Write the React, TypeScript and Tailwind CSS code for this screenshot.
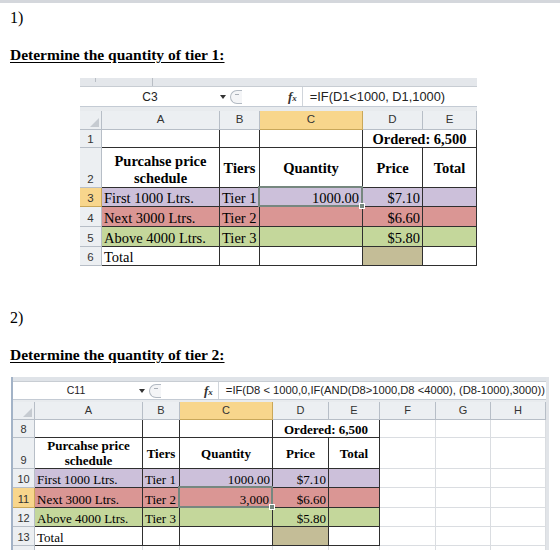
import React from "react";
import clsx from "clsx";

type Align = "l" | "c" | "r";

type CellSpec = {
  t?: React.ReactNode;
  a?: Align;
  bg?: string;
  b?: boolean;
  wide?: boolean;
  grid?: boolean;
  mid?: boolean;
  sel?: boolean;
  lh?: string;
};

type RowSpec = { n: string; h: string; sel?: boolean; open?: boolean; cells: CellSpec[] };

const PURPLE = "bg-[#ccc0da]";
const RED = "bg-[#da9694]";
const GREEN = "bg-[#c4d79b]";
const TAN = "bg-[#c4bd97]";

const HEAD_BG = "bg-[#eceff2]";
const HEAD_SEL = "bg-[#f8d68c]";

function Cell({ c, lead, open }: { c: CellSpec; lead: string; open?: boolean }) {
  return (
    <div
      className={clsx(
        "relative flex min-w-0 border-r",
        !open && "border-b",
        c.grid ? "border-[#dadde1]" : "border-[#2f2f2f]",
        c.wide && "col-span-2",
        c.mid ? "items-center" : "items-end",
        c.a === "r"
          ? c.sel
            ? "justify-end pr-[3px]"
            : "justify-end pr-[2px]"
          : c.a === "c"
            ? "justify-center text-center"
            : "justify-start pl-[2px]",
        c.bg ?? "bg-white",
        c.b && "font-bold"
      )}
    >
      {c.t !== undefined && <span className={clsx("whitespace-nowrap", c.lh ?? lead)}>{c.t}</span>}
      {c.sel && (
        <span className="pointer-events-none absolute -left-[2px] -top-[2px] -right-[1px] -bottom-[1px] z-10 border-2 border-[#76877f]">
          <span className="absolute -right-[4px] -bottom-[4px] h-[6px] w-[6px] border border-white bg-[#76877f]" />
        </span>
      )}
    </div>
  );
}

function FormulaBar(props: {
  name: string;
  formula: string;
  h: string;
  nameW: string;
  nameSize: string;
  fxMl: string;
  textSize: string;
}) {
  return (
    <div className={clsx("flex items-center border-b border-[#c4cbd4] bg-white", props.h)}>
      <div className={clsx("flex h-full items-center", props.nameW)}>
        <span
          className={clsx(
            "flex-1 text-center font-['Liberation_Sans',Arial,sans-serif] text-[#222]",
            props.nameSize
          )}
        >
          {props.name}
        </span>
        <span className="mr-[4px] h-0 w-0 border-x-[3px] border-t-[4px] border-x-transparent border-t-[#333]" />
      </div>
      <span className="flex h-[14px] w-[12px] rounded-l-full border border-r-0 border-[#b3bac3] bg-[#f4f5f7]">
        <span className="ml-[4px] mt-[3px] h-px w-[4px] bg-[#aab0b8]" />
      </span>
      <span
        className={clsx(
          "font-['Liberation_Serif',serif] text-[13px] font-bold italic leading-none text-[#333]",
          props.fxMl
        )}
      >
        f<span className="text-[9px]">x</span>
      </span>
      <span className="ml-[5px] h-full w-px bg-[#d0d5db]" />
      <span
        className={clsx(
          "whitespace-nowrap pl-[7px] font-['Liberation_Sans',Arial,sans-serif] text-[#222]",
          props.textSize
        )}
      >
        {props.formula}
      </span>
    </div>
  );
}

function Grid(props: {
  cols: string;
  headH: string;
  labels: string[];
  selCol: number;
  rows: RowSpec[];
  uiSize: string;
  lead: string;
}) {
  return (
    <div>
      <div className={clsx("grid", props.cols, props.headH)}>
        <div className={clsx("flex items-end justify-end border-r border-b border-[#b7bec7] p-[2px]", HEAD_BG)}>
          <span className="h-0 w-0 border-b-[9px] border-l-[9px] border-b-[#c6cbd1] border-l-transparent" />
        </div>
        {props.labels.map((l, i) => (
          <div
            key={l}
            className={clsx(
              "flex items-center justify-center border-r border-b font-['Liberation_Sans',Arial,sans-serif] text-[#333]",
              props.uiSize,
              i === props.selCol ? clsx(HEAD_SEL, "border-[#c9a759]") : clsx(HEAD_BG, "border-[#b7bec7]")
            )}
          >
            {l}
          </div>
        ))}
      </div>
      {props.rows.map((r) => (
        <div key={r.n} className={clsx("grid", props.cols, r.h)}>
          <div
            className={clsx(
              "flex items-end justify-center border-r font-['Liberation_Sans',Arial,sans-serif] text-[#333]",
              !r.open && "border-b",
              props.uiSize,
              r.sel ? clsx(HEAD_SEL, "border-[#c9a759]") : clsx(HEAD_BG, "border-[#b7bec7]")
            )}
          >
            {!r.open && <span className="leading-[15px]">{r.n}</span>}
          </div>
          {r.cells.map((c, i) => (
            <Cell key={i} c={c} lead={props.lead} open={r.open} />
          ))}
        </div>
      ))}
    </div>
  );
}

const g: CellSpec = { grid: true };

const sheetOne: RowSpec[] = [
  { n: "1", h: "h-[18px]", cells: [{}, {}, {}, { t: "Ordered: 6,500", a: "c", b: true, wide: true }] },
  {
    n: "2",
    h: "h-[40px]",
    cells: [
      {
        t: (
          <>
            Purcahse price
            <br />
            schedule
          </>
        ),
        a: "c",
        b: true,
        lh: "leading-[17px]",
      },
      { t: "Tiers", a: "c", b: true, mid: true },
      { t: "Quantity", a: "c", b: true, mid: true },
      { t: "Price", a: "c", b: true, mid: true },
      { t: "Total", a: "c", b: true, mid: true },
    ],
  },
  {
    n: "3",
    h: "h-[19px]",
    sel: true,
    cells: [
      { t: "First 1000 Ltrs.", bg: PURPLE },
      { t: "Tier 1", bg: PURPLE },
      { t: "1000.00", a: "r", bg: PURPLE, sel: true },
      { t: "$7.10", a: "r", bg: PURPLE },
      { bg: PURPLE },
    ],
  },
  {
    n: "4",
    h: "h-[20px]",
    cells: [
      { t: "Next 3000 Ltrs.", bg: RED },
      { t: "Tier 2", bg: RED },
      { bg: RED },
      { t: "$6.60", a: "r", bg: RED },
      { bg: RED },
    ],
  },
  {
    n: "5",
    h: "h-[20px]",
    cells: [
      { t: "Above 4000 Ltrs.", bg: GREEN },
      { t: "Tier 3", bg: GREEN },
      { bg: GREEN },
      { t: "$5.80", a: "r", bg: GREEN },
      { bg: GREEN },
    ],
  },
  { n: "6", h: "h-[19px]", cells: [{ t: "Total" }, {}, {}, { bg: TAN }, {}] },
];

const sheetTwo: RowSpec[] = [
  { n: "8", h: "h-[18px]", cells: [{}, {}, {}, { t: "Ordered: 6,500", a: "c", b: true, wide: true }, g, g, g] },
  {
    n: "9",
    h: "h-[31px]",
    cells: [
      {
        t: (
          <>
            Purcahse price
            <br />
            schedule
          </>
        ),
        a: "c",
        b: true,
        lh: "leading-[15px]",
      },
      { t: "Tiers", a: "c", b: true, mid: true },
      { t: "Quantity", a: "c", b: true, mid: true },
      { t: "Price", a: "c", b: true, mid: true },
      { t: "Total", a: "c", b: true, mid: true },
      g,
      g,
      g,
    ],
  },
  {
    n: "10",
    h: "h-[19px]",
    cells: [
      { t: "First 1000 Ltrs.", bg: PURPLE },
      { t: "Tier 1", bg: PURPLE },
      { t: "1000.00", a: "r", bg: PURPLE },
      { t: "$7.10", a: "r", bg: PURPLE },
      { bg: PURPLE },
      g,
      g,
      g,
    ],
  },
  {
    n: "11",
    h: "h-[20px]",
    sel: true,
    cells: [
      { t: "Next 3000 Ltrs.", bg: RED },
      { t: "Tier 2", bg: RED },
      { t: "3,000", a: "r", bg: RED, sel: true },
      { t: "$6.60", a: "r", bg: RED },
      { bg: RED },
      g,
      g,
      g,
    ],
  },
  {
    n: "12",
    h: "h-[19px]",
    cells: [
      { t: "Above 4000 Ltrs.", bg: GREEN },
      { t: "Tier 3", bg: GREEN },
      { bg: GREEN },
      { t: "$5.80", a: "r", bg: GREEN },
      { bg: GREEN },
      g,
      g,
      g,
    ],
  },
  { n: "13", h: "h-[19px]", cells: [{ t: "Total" }, {}, {}, { bg: TAN }, {}, g, g, g] },
  { n: "14", h: "h-[4px]", open: true, cells: [g, g, g, g, g, g, g, g] },
];

export default function App() {
  return (
    <div className="h-[557px] w-[560px] overflow-hidden bg-white font-['Liberation_Serif','Times_New_Roman',serif] text-black">
      <div className="h-[3px] bg-[#d4d7dc]" />

      <p className="mt-[6px] pl-[10px] text-[16px] leading-[18px]">1)</p>
      <p className="mt-[19px] pl-[10px] text-[15.5px] font-bold leading-[17px] underline underline-offset-[2px]">
        Determine the quantity of tier 1:
      </p>

      {/* first worksheet */}
      <div className="ml-[80px] mt-[15px] w-[397px]">
        <div className="flex h-[9px] border-b border-[#c8cdd3] bg-[#e4e7eb]">
          <div className="w-[16px] border-r border-[#b9bec5] [height:4px]" />
          <div className="w-[57px] border-r border-[#b9bec5]" />
        </div>
        <FormulaBar
          name="C3"
          formula="=IF(D1<1000, D1,1000)"
          h="h-[20px]"
          nameW="w-[150px]"
          nameSize="text-[12px]"
          fxMl="ml-[46px]"
          textSize="text-[12.8px]"
        />
        <div className="h-[4px] bg-[#e8ebee]" />
        <div className="text-[14.5px]">
          <Grid
            cols="grid-cols-[22px_118px_40px_103px_60px_54px]"
            headH="h-[19px]"
            labels={["A", "B", "C", "D", "E"]}
            selCol={2}
            rows={sheetOne}
            uiSize="text-[11.5px]"
            lead="leading-[16px]"
          />
        </div>
      </div>

      <p className="mt-[43px] pl-[10px] text-[16px] leading-[18px]">2)</p>
      <p className="mt-[19px] pl-[10px] text-[15.5px] font-bold leading-[17px] underline underline-offset-[2px]">
        Determine the quantity of tier 2:
      </p>

      {/* second worksheet */}
      <div className="ml-[11px] mt-[14px] w-[538px] border-l-2 border-r-[3px] border-l-[#a3b3c7] border-r-[#e1e4e8]">
        <div className="h-[5px] border-b border-[#c8cdd3] bg-[#dfe3e8]" />
        <FormulaBar
          name="C11"
          formula="=IF(D8 < 1000,0,IF(AND(D8>1000,D8 <4000), (D8-1000),3000))"
          h="h-[18px]"
          nameW="w-[136px]"
          nameSize="text-[10.5px]"
          fxMl="ml-[43px]"
          textSize="text-[11.2px]"
        />
        <div className="h-[2px] bg-[#e8ebee]" />
        <div className="text-[13px]">
          <Grid
            cols="grid-cols-[22px_108px_37px_93px_56px_51px_56px_55px_55px]"
            headH="h-[18px]"
            labels={["A", "B", "C", "D", "E", "F", "G", "H"]}
            selCol={2}
            rows={sheetTwo}
            uiSize="text-[11px]"
            lead="leading-[15px]"
          />
        </div>
      </div>
    </div>
  );
}
